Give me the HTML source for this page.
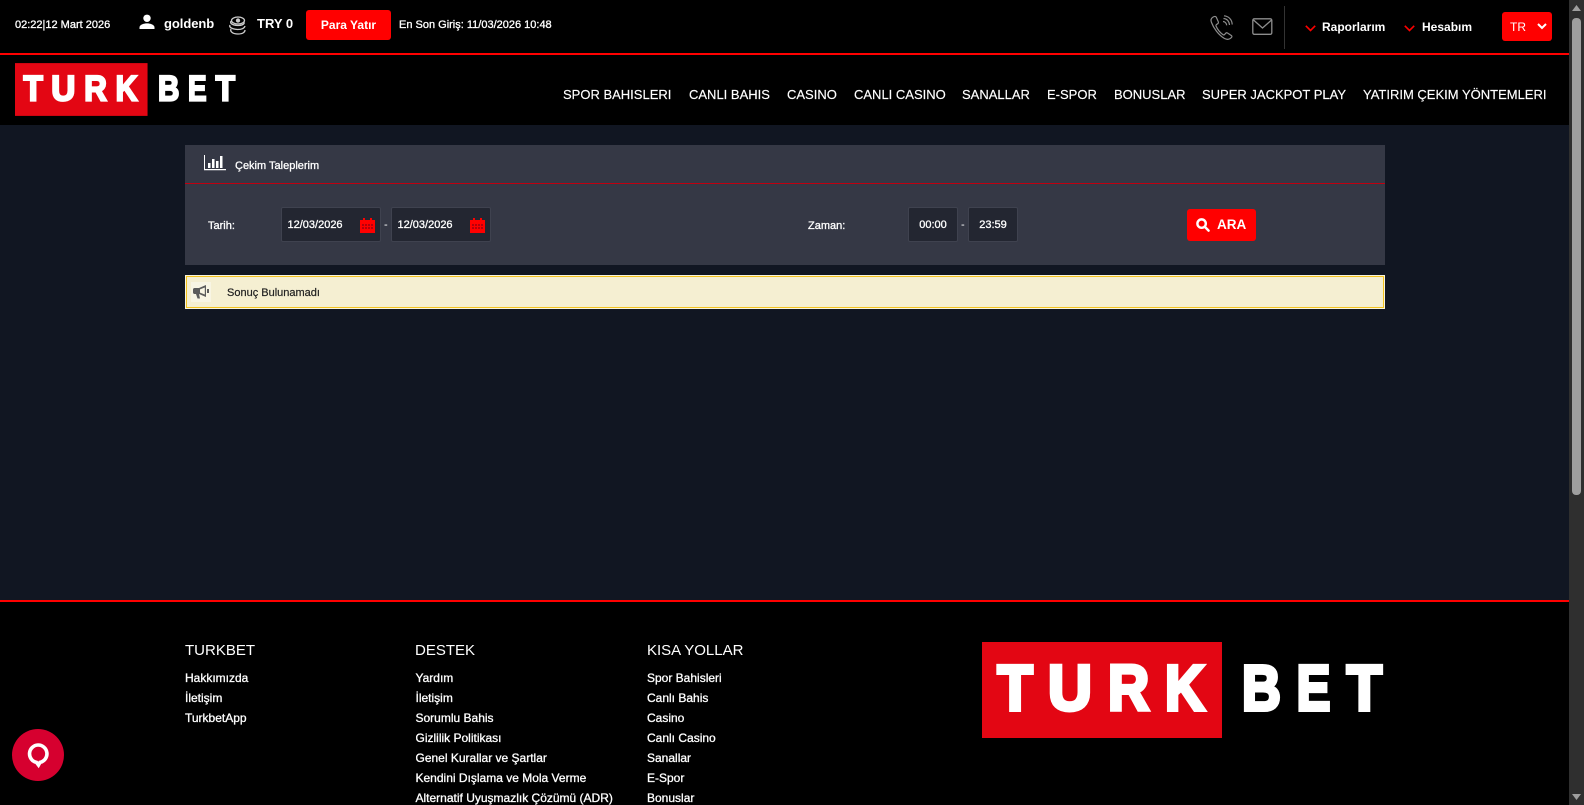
<!DOCTYPE html>
<html lang="tr"><head><meta charset="utf-8"><title>Turkbet</title>
<style>
html,body{margin:0;padding:0;width:1584px;height:805px;overflow:hidden;background:#111622}
body{position:relative;font-family:"Liberation Sans",sans-serif;color:#fff}
.a{position:absolute}
.t{position:absolute;white-space:nowrap;line-height:20px;height:20px}
.s{-webkit-text-stroke:.3px currentColor}
.b{font-weight:700}
.nav{font-size:13px;top:85px;-webkit-text-stroke:.15px #fff}
.f{font-size:12px;-webkit-text-stroke:.3px #fff}
.h{font-size:15px;top:640.500px}
.in{position:absolute;top:207px;height:33px;background:#232631;border:1px solid #3f424f;border-radius:2px;box-sizing:content-box}
svg{position:absolute;overflow:visible}
.logo text{font-family:"Liberation Sans",sans-serif;font-weight:700;font-size:64px;fill:#fff;stroke:#fff;stroke-width:4px}
</style></head><body>
<div class="a" style="left:0;top:0;width:1569px;height:53px;background:#000"></div>
<div class="a" style="left:0;top:53px;width:1569px;height:2px;background:#f00"></div>
<div class="a" style="left:0;top:55px;width:1569px;height:70px;background:#000"></div>

<div class="t s" style="left:15px;top:15px;font-size:11px">02:22|12 Mart 2026</div>
<svg style="left:139px;top:14px" width="16" height="16" viewBox="0 0 16 16"><circle cx="8" cy="4.3" r="3.7" fill="#fff"/><path d="M0.5 15v-1.6C0.5 10.6 5 9.4 8 9.4s7.500 1.200 7.500 4V15z" fill="#fff"/></svg>
<div class="t b" style="left:164px;top:14px;font-size:13px;letter-spacing:-.05px">goldenb</div>
<svg style="left:228px;top:16px" width="19" height="20" viewBox="0 0 19 20" fill="none" stroke="#ccc" stroke-width="1.300"><ellipse cx="10" cy="4.500" rx="6.500" ry="3.500"/><path d="M3 5c-1 2 0 4 7 4.500 4 0 6-1.500 6.500-3"/><path d="M2 9c-1 2 1 4 7.500 4.500 5 0 7-1.500 7.500-3.500"/><path d="M3 13c-1 2 1 5 7 5 5 0 7-2 7-4"/><circle cx="10" cy="4.500" r="1.500" fill="#ccc"/></svg>
<div class="t b" style="left:257px;top:14px;font-size:13px">TRY 0</div>
<div class="a" style="left:306px;top:10px;width:85px;height:30px;background:#f00;border-radius:3px"></div>
<div class="t b" style="left:306px;top:15px;width:85px;text-align:center;font-size:12px">Para Yatır</div>
<div class="t s" style="left:399px;top:15px;font-size:11px">En Son Giriş: 11/03/2026 10:48</div>

<svg style="left:1210px;top:15px" width="25" height="26" viewBox="0 0 25 26" fill="none" stroke="#8d8d8d" stroke-width="1.200"><path d="M2.500 2.500C1 3.500.5 5 1.500 7.500c2 5.500 7 12.500 13 16 2.500 1.300 5 1 7-1 .7-.8.5-1.500-.2-2l-3.800-2.500c-.8-.4-1.300-.3-1.800.3l-1.200 1.300c-.5.400-1 .4-1.500.1C10 17.500 7.500 14.500 6 11c-.2-.6 0-1 .4-1.400L8 8.500c.5-.5.600-1 .3-1.700L6.300 2.300C5.800 1 4 1.300 2.500 2.500z"/><path d="M13 6.500c2 .2 3.500 1.800 3.700 3.800M13.500 3.500c3.500.2 5.800 3 6 6.500M14 .8c4.500.3 8 3.700 8.200 8.700"/></svg>
<svg style="left:1252px;top:18px" width="21" height="18" viewBox="0 0 21 18" fill="none" stroke="#8d8d8d" stroke-width="1.300"><rect x=".8" y=".8" width="19" height="15.500" rx="1.500"/><path d="M1.500 2l9 8 9-8"/></svg>
<div class="a" style="left:1284px;top:6px;width:1px;height:43px;background:#333"></div>
<svg style="left:1305px;top:25px" width="11" height="7" viewBox="0 0 11 7" fill="none" stroke="#f00" stroke-width="1.600"><path d="M.8.8l4.700 4.700L10.200.8"/></svg>
<div class="t b" style="left:1322px;top:17px;font-size:12px">Raporlarım</div>
<svg style="left:1404px;top:25px" width="11" height="7" viewBox="0 0 11 7" fill="none" stroke="#f00" stroke-width="1.600"><path d="M.8.8l4.700 4.700L10.200.8"/></svg>
<div class="t b" style="left:1422px;top:17px;font-size:12px">Hesabım</div>
<div class="a" style="left:1502px;top:12px;width:50px;height:29px;background:#f00;border-radius:3px"></div>
<div class="t" style="left:1510px;top:17px;font-size:12px">TR</div>
<svg style="left:1537px;top:23px" width="10" height="7" viewBox="0 0 10 7" fill="none" stroke="#fff" stroke-width="2"><path d="M1 1l4 4 4-4"/></svg>

<svg class="logo" style="left:15px;top:63px" width="220" height="53" viewBox="0 0 400 96"><rect width="241" height="96" fill="#e30613"/>
<text transform="translate(15.500,68) scale(.9,1)">T</text><text transform="translate(66,68) scale(.95,1)">U</text><text transform="translate(126,68) scale(.89,1)">R</text><text transform="translate(183,68) scale(.86,1)">K</text><text transform="translate(260,68) scale(.84,1)">B</text><text transform="translate(314.600,68) scale(.79,1)">E</text><text transform="translate(364.800,68) scale(.9,1)">T</text></svg>

<div class="t nav" style="left:563px">SPOR BAHISLERI</div>
<div class="t nav" style="left:689px">CANLI BAHIS</div>
<div class="t nav" style="left:787px">CASINO</div>
<div class="t nav" style="left:854px">CANLI CASINO</div>
<div class="t nav" style="left:962px">SANALLAR</div>
<div class="t nav" style="left:1047px">E-SPOR</div>
<div class="t nav" style="left:1114px">BONUSLAR</div>
<div class="t nav" style="left:1202px">SUPER JACKPOT PLAY</div>
<div class="t nav" style="left:1363px">YATIRIM ÇEKIM YÖNTEMLERI</div>

<div class="a" style="left:185px;top:145px;width:1200px;height:120px;background:#353845"></div>
<div class="a" style="left:185px;top:183px;width:1200px;height:1px;background:#c00010"></div>
<svg style="left:204px;top:155px" width="22" height="16" viewBox="0 0 22 16" fill="#fff"><path d="M0 0h1v14h21v1.200H0z"/><rect x="4" y="8" width="2.500" height="5"/><rect x="8" y="4" width="2.500" height="9"/><rect x="12" y="6" width="2.500" height="7"/><rect x="16" y="1" width="2.500" height="12"/></svg>
<div class="t s" style="left:235px;top:156px;font-size:11px">Çekim Taleplerim</div>
<div class="t s" style="left:208px;top:216px;font-size:11px">Tarih:</div>
<div class="in" style="left:281px;width:98px"></div>
<div class="t s" style="left:287.500px;top:215px;font-size:11px">12/03/2026</div>
<svg style="left:360px;top:218px" width="15" height="15" viewBox="0 0 15 15" fill="#f00"><path d="M0 2h3V0h2v2h5V0h2v2h3v13H0z"/><path d="M2 6h2v2H2zM5 6h2v2H5zM8 6h2v2H8zM11 6h2v2h-2zM2 9h2v2H2zM5 9h2v2H5zM8 9h2v2H8zM11 9h2v2h-2z" fill="#b5000c"/></svg>
<div class="t" style="left:384px;top:215px;font-size:11px">-</div>
<div class="in" style="left:391px;width:98px"></div>
<div class="t s" style="left:397.500px;top:215px;font-size:11px">12/03/2026</div>
<svg style="left:470px;top:218px" width="15" height="15" viewBox="0 0 15 15" fill="#f00"><path d="M0 2h3V0h2v2h5V0h2v2h3v13H0z"/><path d="M2 6h2v2H2zM5 6h2v2H5zM8 6h2v2H8zM11 6h2v2h-2zM2 9h2v2H2zM5 9h2v2H5zM8 9h2v2H8zM11 9h2v2h-2z" fill="#b5000c"/></svg>
<div class="t s" style="left:808px;top:216px;font-size:11px">Zaman:</div>
<div class="in" style="left:908px;width:48px"></div>
<div class="t s" style="left:908px;top:215px;width:50px;text-align:center;font-size:11px">00:00</div>
<div class="t" style="left:961px;top:215px;font-size:11px">-</div>
<div class="in" style="left:968px;width:48px"></div>
<div class="t s" style="left:968px;top:215px;width:50px;text-align:center;font-size:11px">23:59</div>
<div class="a" style="left:1187px;top:209px;width:69px;height:32px;background:#f00;border-radius:3px"></div>
<svg style="left:1196px;top:218px" width="14" height="14" viewBox="0 0 15 15" fill="none" stroke="#fff" stroke-width="2.600"><circle cx="6" cy="6" r="4.500"/><path d="M9.500 9.500l4 4" stroke-linecap="round"/></svg>
<div class="t b" style="left:1217px;top:215px;font-size:13.500px">ARA</div>

<div class="a" style="left:185px;top:275px;width:1200px;height:34px;box-sizing:border-box;background:#f5efd2;border:1px solid #f9f4dc;box-shadow:inset 0 0 0 1px #f2c21f"></div>
<div class="a" style="left:191px;top:282px;width:20px;height:20px;background:#f8f5e4"></div>
<svg style="left:193px;top:285px" width="16" height="14" viewBox="0 0 16 14" fill="#5c5c5c"><path d="M13 0v12L6 9H1.500C.7 9 0 8.300 0 7.500v-3C0 3.700.7 3 1.500 3H6z"/><path d="M3 9h3l1 4.500H4.500z"/><path d="M11.800 2.500L7 4.400v3.200l4.800 1.900z" fill="#f8f5e4"/><rect x="14" y="4" width="2" height="4"/></svg>
<div class="t" style="left:227px;top:283px;font-size:11px;color:#222;-webkit-text-stroke:.2px #222">Sonuç Bulunamadı</div>

<div class="a" style="left:0;top:600px;width:1569px;height:205px;background:#000"></div>
<div class="a" style="left:0;top:600px;width:1569px;height:2px;background:#f00"></div>

<div class="t h" style="left:185px">TURKBET</div>
<div class="t f" style="left:185px;top:668px">Hakkımızda</div>
<div class="t f" style="left:185px;top:688px">İletişim</div>
<div class="t f" style="left:185px;top:708px">TurkbetApp</div>
<div class="t h" style="left:415px">DESTEK</div>
<div class="t f" style="left:415.500px;top:668px">Yardım</div>
<div class="t f" style="left:415.500px;top:688px">İletişim</div>
<div class="t f" style="left:415.500px;top:708px">Sorumlu Bahis</div>
<div class="t f" style="left:415.500px;top:728px">Gizlilik Politikası</div>
<div class="t f" style="left:415.500px;top:748px">Genel Kurallar ve Şartlar</div>
<div class="t f" style="left:415.500px;top:768px">Kendini Dışlama ve Mola Verme</div>
<div class="t f" style="left:415.500px;top:788px">Alternatif Uyuşmazlık Çözümü (ADR)</div>
<div class="t h" style="left:647px">KISA YOLLAR</div>
<div class="t f" style="left:647px;top:668px">Spor Bahisleri</div>
<div class="t f" style="left:647px;top:688px">Canlı Bahis</div>
<div class="t f" style="left:647px;top:708px">Casino</div>
<div class="t f" style="left:647px;top:728px">Canlı Casino</div>
<div class="t f" style="left:647px;top:748px">Sanallar</div>
<div class="t f" style="left:647px;top:768px">E-Spor</div>
<div class="t f" style="left:647px;top:788px">Bonuslar</div>

<svg class="logo" style="left:982px;top:642px" width="400" height="96" viewBox="0 0 400 96"><rect width="240" height="96" fill="#e30613"/>
<text transform="translate(15.500,68) scale(.9,1)">T</text><text transform="translate(66,68) scale(.95,1)">U</text><text transform="translate(126,68) scale(.89,1)">R</text><text transform="translate(183,68) scale(.86,1)">K</text><text transform="translate(260,68) scale(.84,1)">B</text><text transform="translate(314.600,68) scale(.79,1)">E</text><text transform="translate(364.800,68) scale(.9,1)">T</text></svg>

<div class="a" style="left:12px;top:729px;width:52px;height:52px;border-radius:50%;background:#d6002f"></div>
<svg style="left:27px;top:743px" width="22" height="25" viewBox="0 0 22 25" fill="none" stroke="#fff" stroke-width="3.600"><path d="M11 2a8.800 8.800 0 0 1 2 17.400L11.500 22 9.500 19.400A8.800 8.800 0 0 1 11 2z"/></svg>

<div class="a" style="left:1569px;top:0;width:15px;height:805px;background:#2f2f2f"></div>
<div class="a" style="left:1572px;top:18px;width:9px;height:477px;background:#9f9f9f;border-radius:4px"></div>
<svg style="left:1572px;top:5px" width="9" height="7"><path d="M4.500 0L9 6H0z" fill="#9f9f9f"/></svg>
<svg style="left:1572px;top:794px" width="9" height="7"><path d="M0 0h9L4.500 6z" fill="#9f9f9f"/></svg>
</body></html>
